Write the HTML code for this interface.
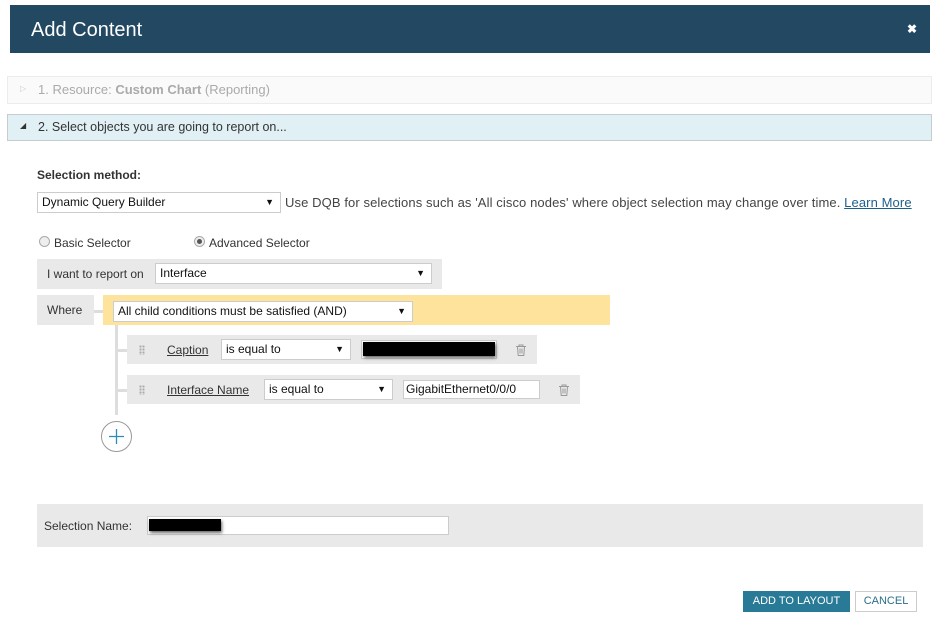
<!DOCTYPE html>
<html><head><style>
*{box-sizing:border-box;margin:0;padding:0}
body{width:936px;height:623px;background:#fff;font-family:"Liberation Sans",sans-serif;font-size:12px;color:#333;position:relative;overflow:hidden}
.a{position:absolute}
.sel{position:absolute;background:#fff;border:1px solid #ccc;font-size:12px;color:#111;padding-left:4px;line-height:18px}
.sel:after{content:"▼";position:absolute;right:6px;top:0;font-size:9px;color:#111}
.lnk{color:#333;text-decoration:underline}
.dots{position:absolute;width:6px;height:10px;background-image:radial-gradient(circle,#aaa 1px,transparent 1.2px);background-size:3px 3px}
</style></head><body>
<div class="a" style="left:10px;top:5px;width:920px;height:48px;background:#224862"></div>
<div class="a" style="left:31px;top:19px;color:#fff;font-size:20px">Add Content</div>
<div class="a" style="left:907px;top:22px;color:#fff;font-size:12px;font-weight:bold">✖</div>

<div class="a" style="left:7px;top:76px;width:925px;height:28px;background:#fafafa;border:1px solid #ececec"></div>
<div class="a" style="left:20px;top:84px;color:#ccc;font-size:8px">▷</div>
<div class="a" style="left:38px;top:82px;color:#aaa;font-size:13px">1. Resource: <b>Custom Chart</b> (Reporting)</div>

<div class="a" style="left:7px;top:114px;width:925px;height:27px;background:#e1f0f5;border:1px solid #c6cdd0"></div>
<div class="a" style="left:20px;top:121px;color:#333;font-size:8px">◢</div>
<div class="a" style="left:38px;top:120px;color:#333;font-size:12.5px">2. Select objects you are going to report on...</div>

<div class="a" style="left:37px;top:168px;font-weight:bold;font-size:12px">Selection method:</div>
<div class="sel" style="left:37px;top:192px;width:244px;height:21px">Dynamic Query Builder</div>
<div class="a" style="left:285px;top:195px;color:#444;font-size:13px;letter-spacing:0.1px">Use DQB for selections such as 'All cisco nodes' where object selection may change over time. <span style="color:#1e5f8a;text-decoration:underline">Learn More</span></div>

<div class="a" style="left:39px;top:236px;width:11px;height:11px;border-radius:50%;border:1px solid #aaa;background:#eee"></div>
<div class="a" style="left:54px;top:236px;font-size:12px">Basic Selector</div>
<div class="a" style="left:194px;top:236px;width:11px;height:11px;border-radius:50%;border:1px solid #aaa;background:#eee"><div style="width:5px;height:5px;border-radius:50%;background:#555;margin:2px"></div></div>
<div class="a" style="left:209px;top:236px;font-size:12px">Advanced Selector</div>

<div class="a" style="left:37px;top:259px;width:405px;height:30px;background:#e9e9e9"></div>
<div class="a" style="left:47px;top:267px;font-size:12px">I want to report on</div>
<div class="sel" style="left:155px;top:263px;width:277px;height:21px">Interface</div>

<div class="a" style="left:37px;top:295px;width:57px;height:30px;background:#e9e9e9"></div>
<div class="a" style="left:47px;top:303px;font-size:12px">Where</div>
<div class="a" style="left:94px;top:310px;width:10px;height:3px;background:#ddd"></div>
<div class="a" style="left:103px;top:295px;width:507px;height:30px;background:#fde39b"></div>
<div class="sel" style="left:113px;top:301px;width:300px;height:21px">All child conditions must be satisfied (AND)</div>

<div class="a" style="left:115px;top:325px;width:3px;height:90px;background:#ddd"></div>
<div class="a" style="left:118px;top:349px;width:10px;height:3px;background:#ddd"></div>
<div class="a" style="left:118px;top:389px;width:10px;height:3px;background:#ddd"></div>

<div class="a" style="left:127px;top:335px;width:410px;height:29px;background:#e9e9e9"></div>
<div class="dots" style="left:139px;top:345px"></div>
<div class="a lnk" style="left:167px;top:343px">Caption</div>
<div class="sel" style="left:221px;top:339px;width:130px;height:21px">is equal to</div>
<div class="a" style="left:361px;top:340px;width:136px;height:19px;background:#fff;border:1px solid #ccc"></div>
<div class="a" style="left:363px;top:342px;width:132px;height:14px;background:#000;box-shadow:1px 2px 3px #666"></div>
<svg class="a" style="left:515px;top:344px" width="12" height="12" viewBox="0 0 12 12"><path d="M1 2.5h10M4 2.5V1h4v1.5M2.5 2.5l.7 9h5.6l.7-9M5 4.5v5M7 4.5v5" stroke="#999" fill="none"/></svg>

<div class="a" style="left:127px;top:375px;width:453px;height:29px;background:#e9e9e9"></div>
<div class="dots" style="left:139px;top:385px"></div>
<div class="a lnk" style="left:167px;top:383px">Interface Name</div>
<div class="sel" style="left:264px;top:379px;width:129px;height:21px">is equal to</div>
<div class="a" style="left:403px;top:380px;width:137px;height:19px;background:#fff;border:1px solid #ccc;padding-left:2px;line-height:17px;color:#111">GigabitEthernet0/0/0</div>
<svg class="a" style="left:558px;top:384px" width="12" height="12" viewBox="0 0 12 12"><path d="M1 2.5h10M4 2.5V1h4v1.5M2.5 2.5l.7 9h5.6l.7-9M5 4.5v5M7 4.5v5" stroke="#999" fill="none"/></svg>

<div class="a" style="left:101px;top:421px;width:31px;height:31px;border-radius:50%;border:1px solid #999;background:#fff"></div>
<svg class="a" style="left:108px;top:428px" width="17" height="17"><path d="M8.5 1v15M1 8.5h15" stroke="#2a8db5" stroke-width="1.3"/></svg>

<div class="a" style="left:37px;top:504px;width:886px;height:43px;background:#e9e9e9"></div>
<div class="a" style="left:44px;top:519px;font-size:12px">Selection Name:</div>
<div class="a" style="left:147px;top:516px;width:302px;height:19px;background:#fff;border:1px solid #ccc"></div>
<div class="a" style="left:149px;top:519px;width:72px;height:12px;background:#000;box-shadow:1px 2px 3px #666"></div>

<div class="a" style="left:743px;top:591px;width:107px;height:21px;background:#297a96;color:#fff;font-size:11px;text-align:center;line-height:21px">ADD TO LAYOUT</div>
<div class="a" style="left:855px;top:591px;width:62px;height:21px;border:1px solid #ccc;color:#2a6f8c;font-size:11px;text-align:center;line-height:19px">CANCEL</div>
</body></html>
